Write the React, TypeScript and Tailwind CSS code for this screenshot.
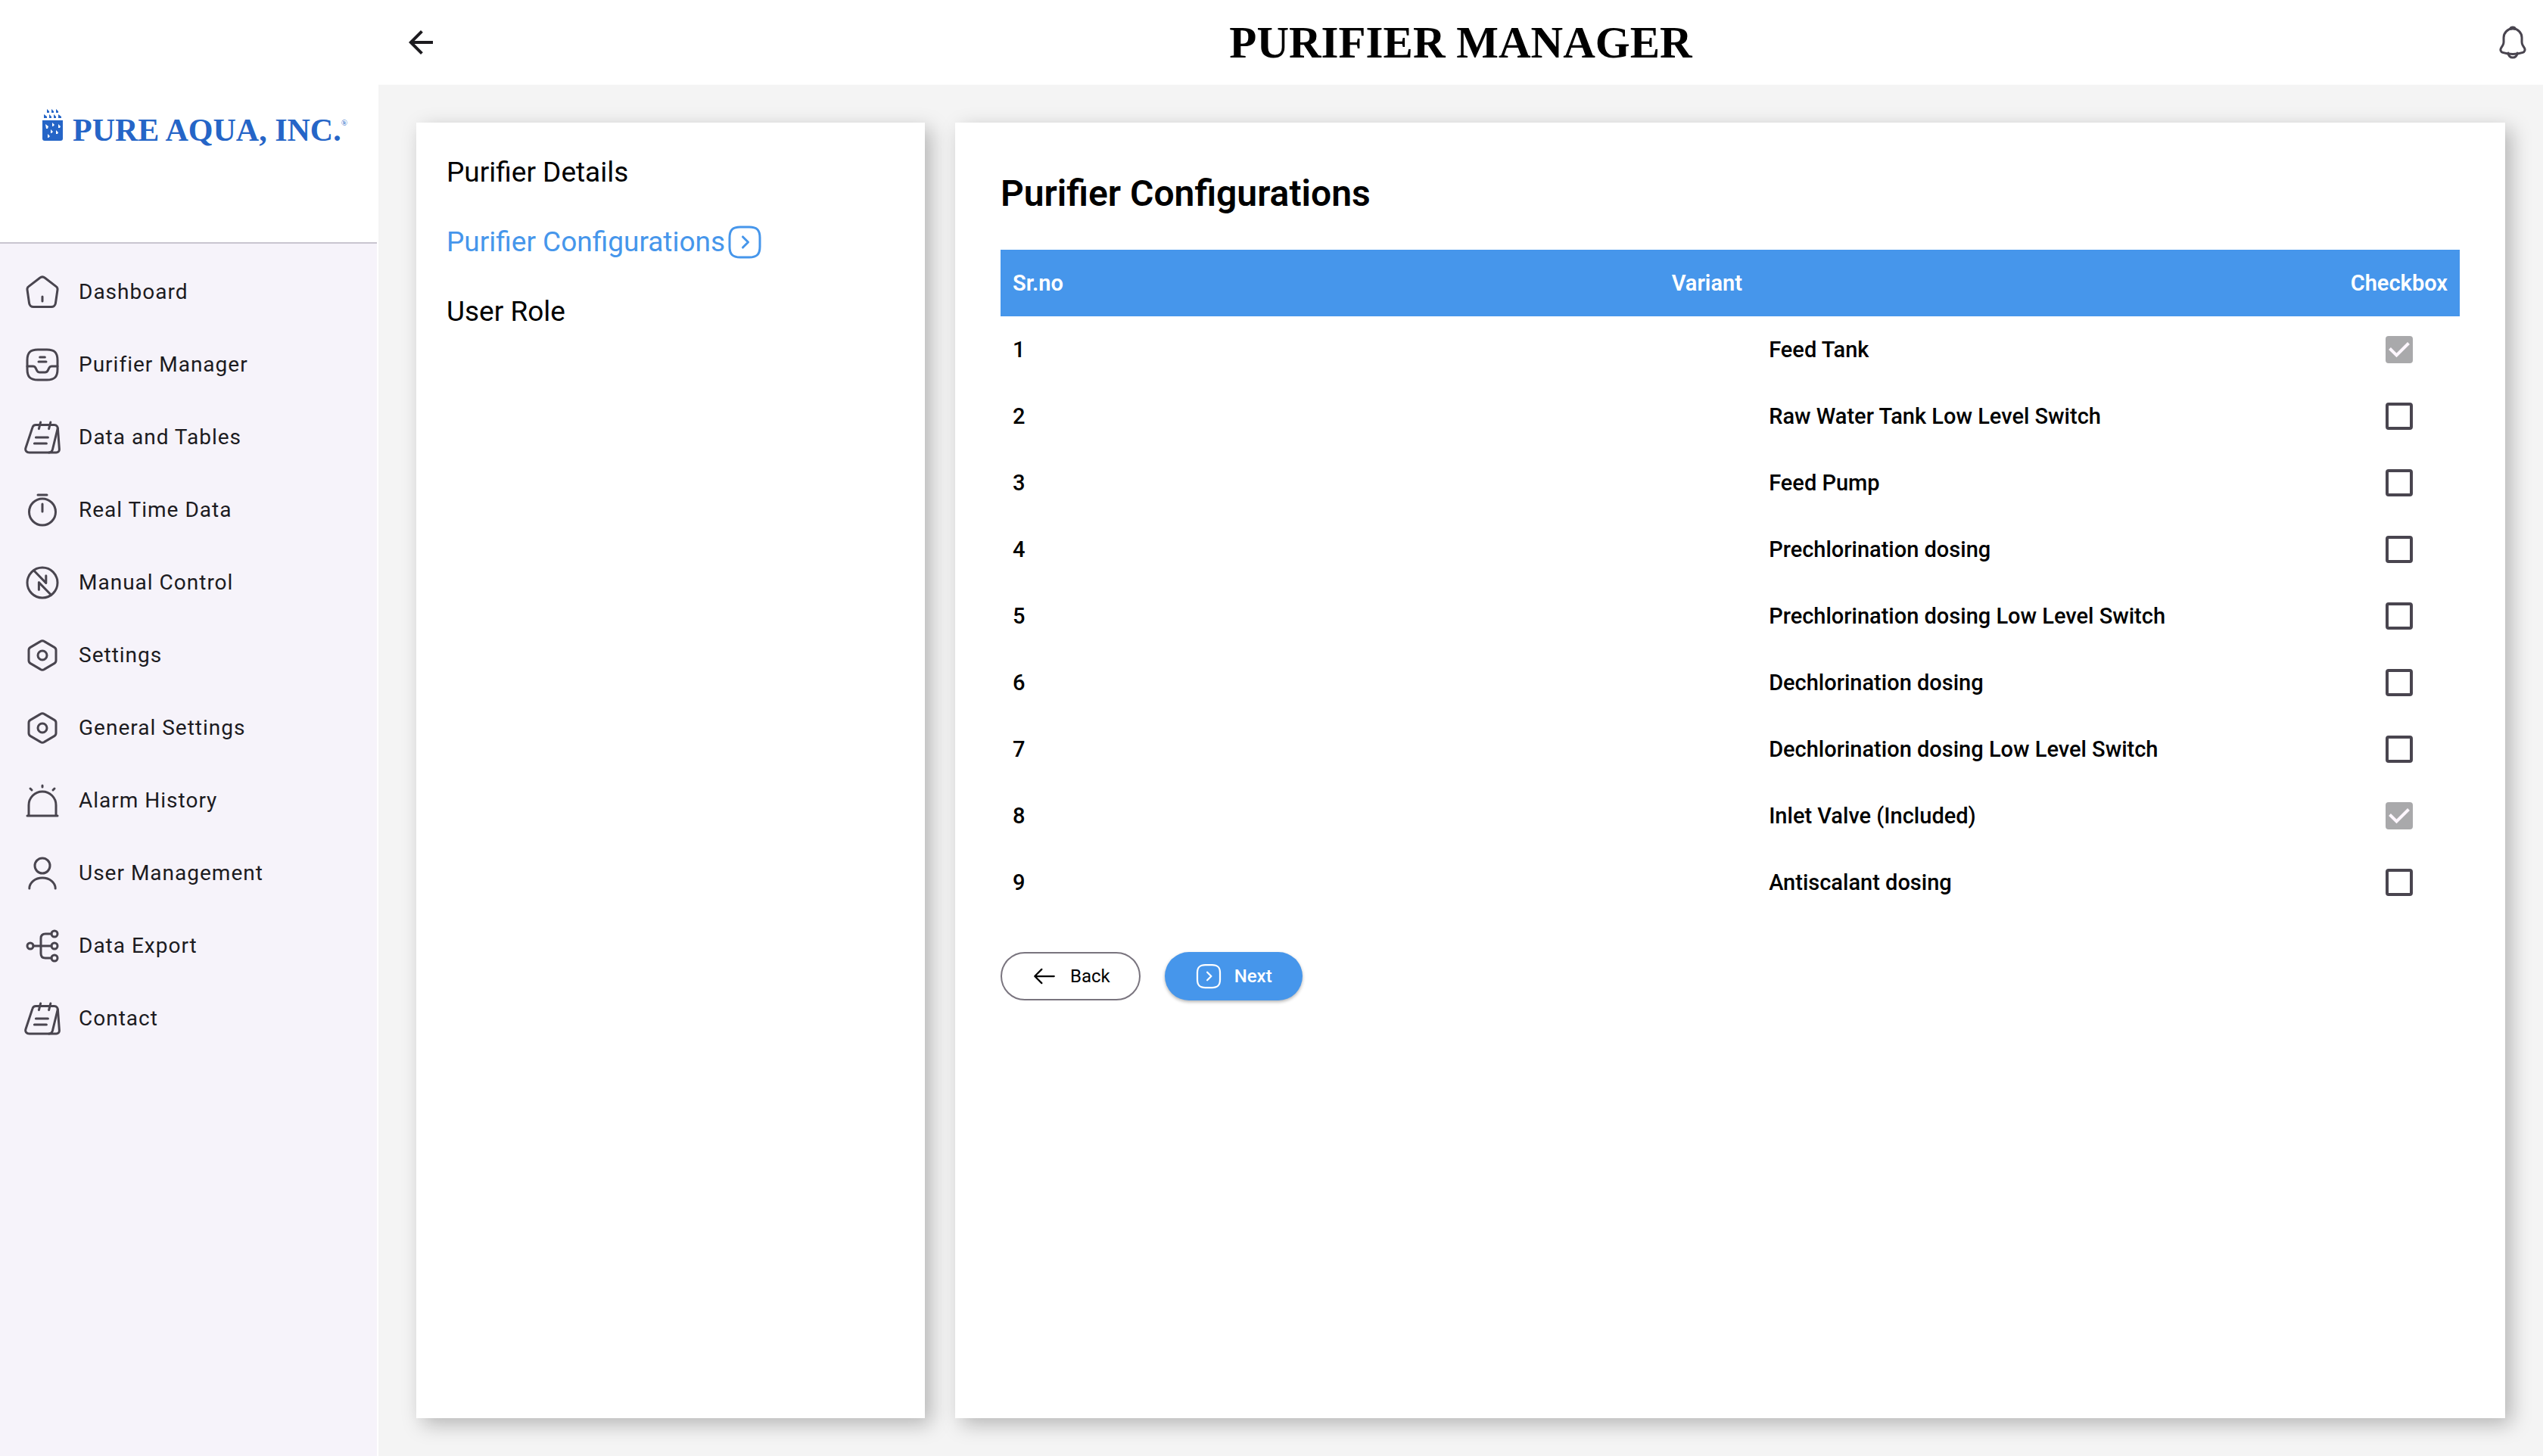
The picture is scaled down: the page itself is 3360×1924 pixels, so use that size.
import type { ReactNode } from "react";

function Icon({ children, className = "size-12" }: { children: ReactNode; className?: string }) {
  return (
    <svg
      viewBox="0 0 24 24"
      fill="none"
      stroke="currentColor"
      strokeWidth="1.5"
      strokeLinecap="round"
      strokeLinejoin="round"
      aria-hidden="true"
      className={`shrink-0 ${className}`}
    >
      {children}
    </svg>
  );
}

const home = (
  <Icon>
    <path d="M10.3 2.6 2.9 8.3c-.7.5-1 1.3-.9 2.1l1.3 9c.2 1.4 1.4 2.4 2.8 2.4h11.8c1.4 0 2.6-1 2.8-2.4l1.3-9c.1-.8-.2-1.6-.9-2.1l-7.4-5.7c-1-.8-2.400-.8-3.400 0Z" />
    <path d="M12 18v-3" />
  </Icon>
);
const drawer = (
  <Icon>
    <path d="M9 22h6c5 0 7-2 7-7V9c0-5-2-7-7-7H9C4 2 2 4 2 9v6c0 5 2 7 7 7Z" />
    <path d="M2 13h3.760c.76 0 1.450.43 1.790 1.110l.89 1.790c.34.68 1.030 1.100 1.790 1.100h3.540c.76 0 1.450-.43 1.790-1.110l.89-1.790A2 2 0 0 1 18.240 13h3.740M10.340 7h3.330M9.500 10h5" />
  </Icon>
);
const note = (
  <Icon>
    <path d="M16.4 22H3.400C1.600 22 .4 20.700 1 18.900L5.500 5.300c.3-1 1.200-1.600 2.200-1.600h12.100c1.600 0 2.600 1.300 2.200 2.800l-3.300 13.600c-.3 1.100-1.200 1.900-2.300 1.900Z" />
    <path d="M16.400 22h4.700c1.300 0 2.200-1 2.100-2.200L22.200 6M10.800 2 9.700 6.300M17.400 2l-1.100 4.300M7.700 12h8M6.700 16h8" />
  </Icon>
);
const timer = (
  <Icon>
    <circle cx="12" cy="13.25" r="8.75" />
    <path d="M12 8v5M9 2h6" />
  </Icon>
);
const flashOff = (
  <Icon>
    <circle cx="12" cy="12" r="10" />
    <path d="m6.300 3.900 8.100 8.300V7.400M9.700 16.600v-4.800l8.100 8.300" />
  </Icon>
);
const setting = (
  <Icon>
    <path d="M3 8.600v6.800c0 .9.4 1.500 1.100 1.900l6.600 3.900c.8.500 1.800.5 2.600 0l6.600-3.900c.7-.4 1.100-1 1.100-1.900V8.600c0-.9-.4-1.500-1.100-1.900l-6.600-3.900c-.8-.5-1.800-.5-2.600 0L4.100 6.700C3.400 7.100 3 7.700 3 8.600Z" />
    <circle cx="12" cy="12" r="3" />
  </Icon>
);
const alarm = (
  <Icon>
    <path d="M3 22v-7a9 9 0 0 1 18 0v7M2 22h20M12 2v1M4 4l1 1M20 4l-1 1" />
  </Icon>
);
const user = (
  <Icon>
    <circle cx="12" cy="7" r="5" />
    <path d="M20.590 22c0-3.870-3.850-7-8.590-7s-8.590 3.130-8.590 7" />
  </Icon>
);
const hierarchy = (
  <Icon>
    <circle cx="4" cy="12" r="2" />
    <circle cx="20" cy="4" r="2" />
    <circle cx="20" cy="12" r="2" />
    <circle cx="20" cy="20" r="2" />
    <path d="M6 12h12M18 4h-4c-2 0-3 1-3 3v10c0 2 1 3 3 3h4" />
  </Icon>
);

function ChevronBox({ className }: { className?: string }) {
  return (
    <Icon className={className}>
      <path d="M9 22h6c5 0 7-2 7-7V9c0-5-2-7-7-7H9C4 2 2 4 2 9v6c0 5 2 7 7 7Z" />
      <path d="M10.740 15.530 14.260 12l-3.520-3.530" />
    </Icon>
  );
}

const nav: { label: string; icon: ReactNode }[] = [
  { label: "Dashboard", icon: home },
  { label: "Purifier Manager", icon: drawer },
  { label: "Data and Tables", icon: note },
  { label: "Real Time Data", icon: timer },
  { label: "Manual Control", icon: flashOff },
  { label: "Settings", icon: setting },
  { label: "General Settings", icon: setting },
  { label: "Alarm History", icon: alarm },
  { label: "User Management", icon: user },
  { label: "Data Export", icon: hierarchy },
  { label: "Contact", icon: note },
];

const variants: { name: string; locked?: boolean }[] = [
  { name: "Feed Tank", locked: true },
  { name: "Raw Water Tank Low Level Switch" },
  { name: "Feed Pump" },
  { name: "Prechlorination dosing" },
  { name: "Prechlorination dosing Low Level Switch" },
  { name: "Dechlorination dosing" },
  { name: "Dechlorination dosing Low Level Switch" },
  { name: "Inlet Valve (Included)", locked: true },
  { name: "Antiscalant dosing" },
];

function Logo() {
  return (
    <div className="flex items-baseline gap-3 text-[#2565c7]">
      <svg viewBox="0 0 28 42" className="h-[42px] w-7 shrink-0" aria-hidden="true">
        <g fill="currentColor">
          <path d="M6 0l3 3v2H6zM12 0l3 3v2h-3zM18 0l3 3v2h-3zM2 7l4 3v2H2zM9 7l3 3v2H9zM15 7l3 3v2h-3zM21 7l4 3v2h-4z" />
          <path d="M0 15h27v24q0 3-3 3H3q-3 0-3-3z" />
        </g>
        <path
          fill="#fff"
          d="M4 20l4 3-1 3H5zM13 18l3 3-2 2h-1zM21 20l3 3-1 2h-2zM11 27l3 3-2 2h-1zM18 28l3 3-1 2h-2zM7 33l3 3-2 2H7z"
        />
      </svg>
      <span className="relative font-['Liberation_Serif',serif] text-[42px] leading-10 font-bold whitespace-nowrap">
        PURE AQUA, INC.
        <span className="absolute top-1 left-full text-[11px] leading-3 font-normal">®</span>
      </span>
    </div>
  );
}

function Sidebar() {
  return (
    <aside className="flex w-[500px] shrink-0 flex-col border-r-2 border-white bg-[#f6f3fa]">
      <div className="h-[322px] border-b-2 border-[#c9c5d0] bg-white pt-36 pl-14">
        <Logo />
      </div>
      <nav className="flex flex-col py-4">
        {nav.map((item) => (
          <a
            key={item.label}
            href="#"
            className="flex h-24 items-center gap-6 px-8 text-[#49454f]"
          >
            {item.icon}
            <span className="text-[28px] leading-10 tracking-[1px] text-[#1c1b1f]">{item.label}</span>
          </a>
        ))}
      </nav>
    </aside>
  );
}

function Header() {
  return (
    <header className="grid h-28 grid-cols-[1fr_auto_1fr] items-center bg-white px-4">
      <button type="button" aria-label="Go back" className="ml-4 justify-self-start text-[#1c1b1f]">
        <svg viewBox="0 0 24 24" fill="currentColor" className="size-12" aria-hidden="true">
          <path d="M20 11H7.830l5.590-5.590L12 4l-8 8 8 8 1.410-1.410L7.830 13H20v-2z" />
        </svg>
      </button>
      <h1 className="font-['Liberation_Serif',serif] text-[59px] leading-[64px] font-bold whitespace-nowrap">
        PURIFIER MANAGER
      </h1>
      <button type="button" aria-label="Notifications" className="justify-self-end text-[#49454f]">
        <Icon>
          <path d="M12.020 2.910c-3.310 0-6 2.690-6 6v2.890c0 .61-.26 1.540-.57 2.060L4.300 15.770c-.71 1.180-.22 2.490 1.080 2.930 4.310 1.440 8.960 1.440 13.270 0 1.210-.4 1.740-1.830 1.080-2.930l-1.150-1.910c-.3-.52-.56-1.450-.56-2.060V8.910c0-3.300-2.700-6-6-6Z" />
          <path d="M13.870 3.200a6.754 6.754 0 0 0-3.700 0c.29-.74 1.010-1.260 1.850-1.260s1.560.52 1.850 1.260Z" />
          <path d="M15.020 19.060c0 1.650-1.350 3-3 3-.82 0-1.580-.34-2.120-.88a3.010 3.010 0 0 1-.88-2.120" />
        </Icon>
      </button>
    </header>
  );
}

function Steps() {
  return (
    <nav
      aria-label="Purifier sections"
      className="flex w-[672px] shrink-0 flex-col bg-white px-10 py-5 text-[37px] leading-[44px] shadow-[8px_8px_25px_rgba(0,0,0,0.26)]"
    >
      <a href="#" className="flex h-23 items-center">
        Purifier Details
      </a>
      <a href="#" aria-current="step" className="flex h-23 items-center gap-0.5 text-[#4696eb]">
        Purifier Configurations
        <ChevronBox className="size-12" />
      </a>
      <a href="#" className="flex h-23 items-center">
        User Role
      </a>
    </nav>
  );
}

function VariantCheckbox({ name, locked }: { name: string; locked?: boolean }) {
  return (
    <span className="relative mx-auto block size-9">
      <input
        type="checkbox"
        aria-label={name}
        defaultChecked={locked}
        disabled={locked}
        className="peer block size-9 appearance-none rounded-sm border-4 border-[#49454f] checked:border-0 checked:bg-[#49454f] disabled:bg-[#a9a9ab]"
      />
      <svg
        viewBox="0 0 36 36"
        fill="none"
        stroke="#fef7ff"
        strokeWidth="4"
        aria-hidden="true"
        className="pointer-events-none absolute inset-0 hidden size-9 peer-checked:block"
      >
        <path d="m5.500 16.500 9 9 16-16" />
      </svg>
    </span>
  );
}

function Configurations() {
  return (
    <section className="flex min-w-0 grow flex-col bg-white px-[60px] pt-16 pb-16 shadow-[8px_8px_25px_rgba(0,0,0,0.26)]">
      <h2 className="text-5xl leading-[60px] font-semibold">Purifier Configurations</h2>
      <table className="mt-11 w-full border-collapse text-[29px] leading-10">
        <thead>
          <tr className="h-22 bg-[#4696eb] text-white">
            <th scope="col" className="w-px px-4 text-left font-semibold">
              Sr.no
            </th>
            <th scope="col" className="px-4 text-center font-semibold">
              Variant
            </th>
            <th scope="col" className="w-px px-4 font-semibold">
              Checkbox
            </th>
          </tr>
        </thead>
        <tbody>
          {variants.map((variant, index) => (
            <tr key={variant.name} className="h-22 font-medium">
              <td className="px-4">{index + 1}</td>
              <td className="px-4">
                <div className="pl-[55%] whitespace-nowrap">{variant.name}</div>
              </td>
              <td className="px-4">
                <VariantCheckbox name={variant.name} locked={variant.locked} />
              </td>
            </tr>
          ))}
        </tbody>
      </table>
      <div className="mt-12 flex gap-8 text-2xl">
        <button
          type="button"
          className="flex h-16 items-center gap-4 rounded-full border-2 border-[#79747e] px-[38px]"
        >
          <Icon className="size-9">
            <path d="M9.570 5.930 3.500 12l6.070 6.070M20.500 12H3.670" />
          </Icon>
          Back
        </button>
        <button
          type="button"
          className="flex h-16 items-center gap-4 rounded-full bg-[#4696eb] px-10 font-medium text-white shadow-[0_2px_4px_rgba(0,0,0,0.3)]"
        >
          <ChevronBox className="size-9" />
          Next
        </button>
      </div>
    </section>
  );
}

export default function App() {
  return (
    <div className="flex min-h-screen bg-[#f4f4f4] font-[Roboto,sans-serif] text-black">
      <Sidebar />
      <div className="flex min-w-0 grow flex-col">
        <Header />
        <main className="flex grow gap-10 p-[50px]">
          <Steps />
          <Configurations />
        </main>
      </div>
    </div>
  );
}
